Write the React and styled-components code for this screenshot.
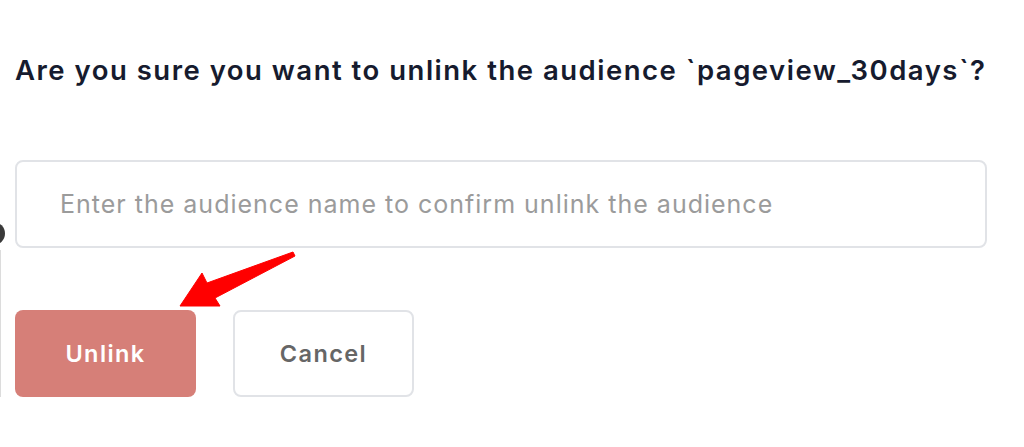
import React from 'react';
import styled, { createGlobalStyle } from 'styled-components';

const GlobalStyle = createGlobalStyle`
    body {
        margin: 0;
        background: #ffffff;
        font-family: "Inter", "Noto Sans", sans-serif;
    }
`;

const Page = styled.div`
    position: relative;
    width: 1024px;
    height: 447px;
    padding: 50px 37px 0 15px;
    box-sizing: border-box;
    overflow: hidden;
`;

const Title = styled.h2`
    margin: 0;
    height: 40px;
    line-height: 40px;
    font-size: 27.5px;
    font-weight: 600;
    letter-spacing: 1.5px;
    color: #161b2e;
    white-space: nowrap;
`;

const Input = styled.input`
    display: block;
    margin-top: 70px;
    width: 100%;
    height: 88px;
    box-sizing: border-box;
    padding: 0 43px;
    border: 2px solid #e1e3e7;
    border-radius: 8px;
    font-family: inherit;
    font-size: 25px;
    letter-spacing: 1px;
    color: #333;
    outline: none;
    &::placeholder {
        color: #9b9b9b;
    }
`;

const Actions = styled.div`
    display: flex;
    gap: 37px;
    margin-top: 62px;
`;

const Button = styled.button`
    width: 181px;
    height: 87px;
    box-sizing: border-box;
    border-radius: 8px;
    font-family: inherit;
    font-size: 23.5px;
    font-weight: 600;
    letter-spacing: 1.4px;
    cursor: pointer;
    background: ${p => (p.$danger ? '#d67f78' : '#ffffff')};
    color: ${p => (p.$danger ? '#ffffff' : '#666666')};
    border: ${p => (p.$danger ? 'none' : '2px solid #e1e3e7')};
`;

const EdgeDot = styled.div`
    position: absolute;
    left: -18px;
    top: 222px;
    width: 23px;
    height: 23px;
    border-radius: 50%;
    background: #3a3a3a;
`;

const EdgeLine = styled.div`
    position: absolute;
    left: 0;
    top: 250px;
    width: 1px;
    height: 147px;
    background: #dcdcdc;
`;

const Arrow = styled.svg`
    position: absolute;
    left: 0;
    top: 0;
    pointer-events: none;
`;

const App = () => {
    return (
        <Page>
            <GlobalStyle />
            <EdgeDot />
            <EdgeLine />
            <Title>Are you sure you want to unlink the audience `pageview_30days`?</Title>
            <Input placeholder="Enter the audience name to confirm unlink the audience" />
            <Actions>
                <Button $danger>Unlink</Button>
                <Button>Cancel</Button>
            </Actions>
            <Arrow width="1024" height="447">
                <polygon
                    points="180,306 202,273 207,283 293,252 295,256 215,298 220,306"
                    fill="#ff0000"
                    stroke="#ff0000"
                    strokeWidth="1"
                    strokeLinejoin="round"
                />
            </Arrow>
        </Page>
    );
};

export default App;
